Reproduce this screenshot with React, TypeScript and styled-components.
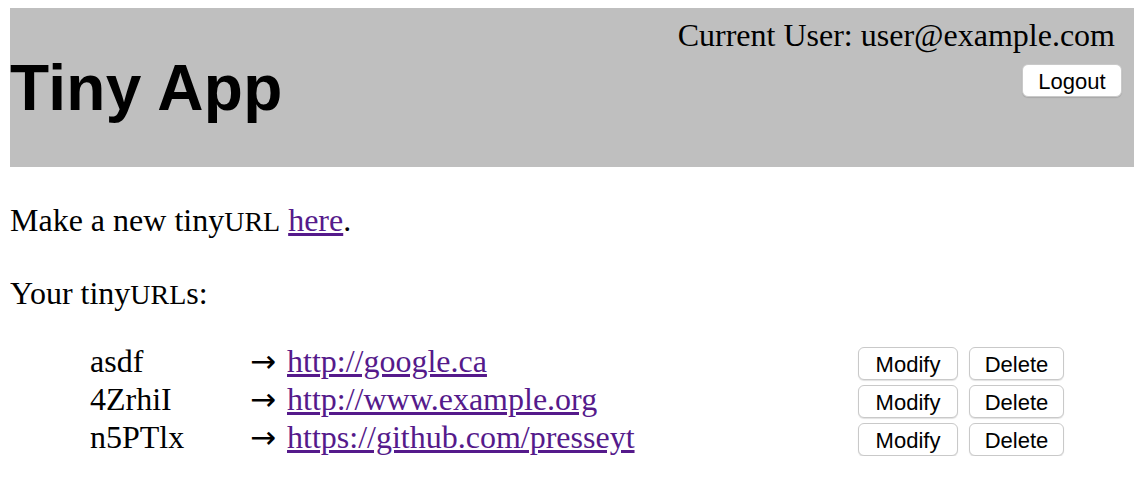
import React from "react";
import styled, { createGlobalStyle } from "styled-components";

const GlobalStyle = createGlobalStyle`
  html, body { background: #ffffff; }
  body {
    margin: 8px 10px;
    font-family: "Liberation Serif", "Times New Roman", serif;
    font-size: 32px;
    color: #000000;
  }
`;

const Header = styled.header`
  display: flex;
  justify-content: space-between;
  align-items: flex-start;
  height: 159px;
  background: #bfbfbf;
`;

const Title = styled.h1`
  margin: 44px 0 0 0;
  font-family: "Liberation Sans", Arial, sans-serif;
  font-weight: 700;
  font-size: 64px;
  line-height: 72px;
  letter-spacing: 0.3px;
`;

const UserBox = styled.div`
  display: flex;
  flex-direction: column;
  align-items: flex-end;
  padding: 9px 12px 0 0;
`;

const UserLine = styled.div`
  font-size: 32px;
  line-height: 36px;
  padding-right: 7px;
`;

const Button = styled.button<{ $top?: number; $width: number }>`
  box-sizing: border-box;
  display: inline-flex;
  align-items: center;
  justify-content: center;
  width: ${(p) => p.$width}px;
  height: 33px;
  margin-top: ${(p) => p.$top ?? 0}px;
  padding: 3px 0 0;
  background: #ffffff;
  border: 1px solid #c9c9c9;
  border-radius: 6px;
  box-shadow: 0 1px 1px rgba(0, 0, 0, 0.12);
  font-family: "Liberation Sans", Arial, sans-serif;
  font-size: 22px;
  color: #000000;
  cursor: pointer;
`;

const Main = styled.main`
  padding-top: 35px;
`;

const Para = styled.p<{ $top?: number }>`
  margin: ${(p) => p.$top ?? 0}px 0 0 0;
  line-height: 36px;
`;

const Abbr = styled.span`
  font-size: 28px;
  line-height: 1;
`;

const Link = styled.a`
  color: #551a8b;
  text-decoration: underline;
`;

const List = styled.div`
  margin-top: 31px;
  padding: 0 70px 0 80px;
`;

const Row = styled.div`
  display: grid;
  grid-template-columns: 160px 37px 1fr auto;
  height: 38px;
  line-height: 38px;
`;

const Cell = styled.span`
  white-space: nowrap;
`;

const Arrow = styled.span`
  font-family: "DejaVu Sans", sans-serif;
  font-size: 31px;
`;

const Actions = styled.div`
  display: flex;
  gap: 11px;
  align-self: end;
`;

const urls = [
  { id: "asdf", url: "http://google.ca" },
  { id: "4ZrhiI", url: "http://www.example.org" },
  { id: "n5PTlx", url: "https://github.com/presseyt" },
];

export default function App() {
  return (
    <>
      <GlobalStyle />
      <Header>
        <Title>Tiny App</Title>
        <UserBox>
          <UserLine>Current User: user@example.com</UserLine>
          <Button $top={11} $width={100}>
            Logout
          </Button>
        </UserBox>
      </Header>
      <Main>
        <Para>
          Make a new tiny<Abbr>URL</Abbr> <Link href="#">here</Link>.
        </Para>
        <Para $top={37}>
          Your tiny<Abbr>URL</Abbr>s:
        </Para>
        <List>
          {urls.map((u) => (
            <Row key={u.id}>
              <Cell>{u.id}</Cell>
              <Arrow>→</Arrow>
              <Cell>
                <Link href="#">{u.url}</Link>
              </Cell>
              <Actions>
                <Button $width={100}>Modify</Button>
                <Button $width={95}>Delete</Button>
              </Actions>
            </Row>
          ))}
        </List>
      </Main>
    </>
  );
}
